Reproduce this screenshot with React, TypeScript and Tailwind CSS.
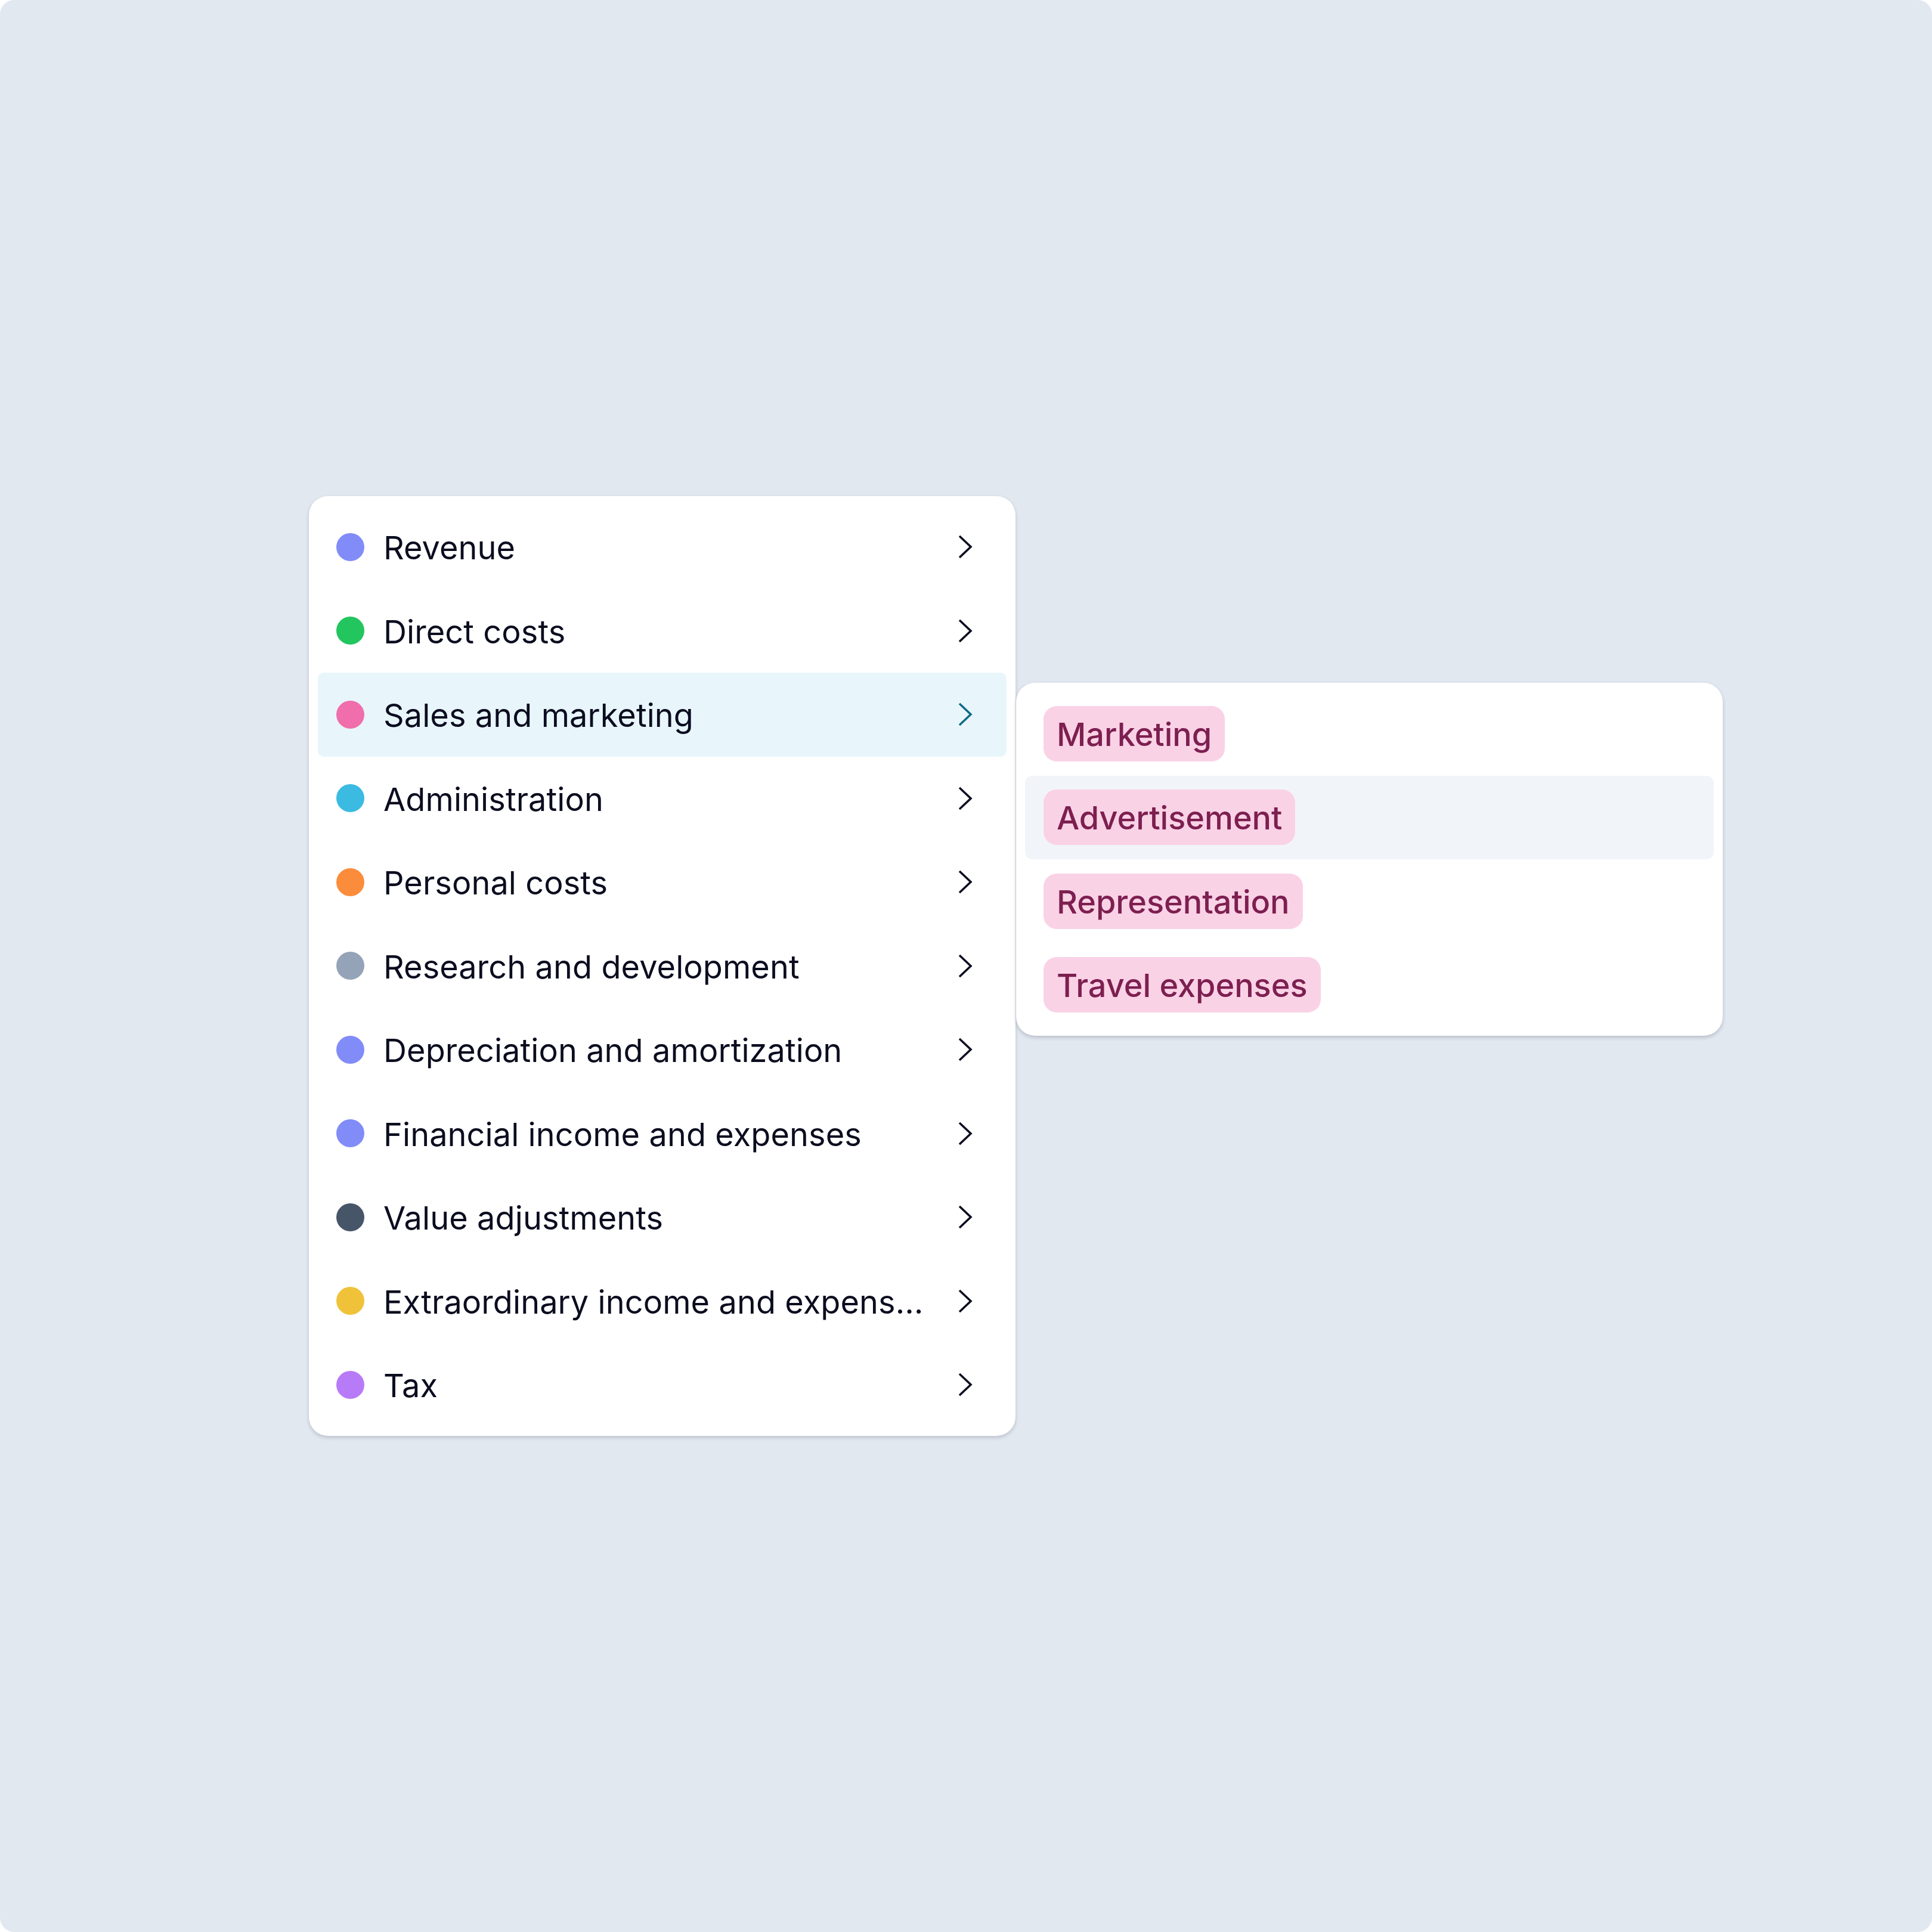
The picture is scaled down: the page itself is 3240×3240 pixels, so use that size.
import React from 'react';

const categories = [
  { name: 'Revenue', color: 'bg-[#818cf8]' },
  { name: 'Direct costs', color: 'bg-[#22c55e]' },
  { name: 'Sales and marketing', color: 'bg-[#f06eab]', active: true },
  { name: 'Administration', color: 'bg-[#3bbae2]' },
  { name: 'Personal costs', color: 'bg-[#fb8c3c]' },
  { name: 'Research and development', color: 'bg-[#94a3b8]' },
  { name: 'Depreciation and amortization', color: 'bg-[#818cf8]' },
  { name: 'Financial income and expenses', color: 'bg-[#818cf8]' },
  { name: 'Value adjustments', color: 'bg-[#475569]' },
  { name: 'Extraordinary income and expenses', color: 'bg-[#efc23a]' },
  { name: 'Tax', color: 'bg-[#b87bf7]' },
];

const subItems = ['Marketing', 'Advertisement', 'Representation', 'Travel expenses'];

function Chevron({ active }: { active?: boolean }) {
  return (
    <svg width="24" height="40" viewBox="0 0 24 40" fill="none" className="shrink-0">
      <polyline
        points="2,2 21,20 2,38"
        stroke={active ? '#0f6b86' : '#0b0d1f'}
        strokeWidth="3.6"
        strokeLinejoin="miter"
      />
    </svg>
  );
}

export default function App() {
  return (
    <div className="w-[3240px] h-[3240px] bg-white" style={{ fontFamily: 'Inter, "Noto Sans", sans-serif' }}>
      <div className="w-full h-full rounded-[24px] bg-[#e2e8f0] pl-[518px] pt-[832px]">
        <div className="relative w-[1185px]">
          {/* main list */}
          <div className="w-[1185px] rounded-[32px] bg-white p-[15px] shadow-[0_3px_6px_rgba(15,23,42,0.18)]">
            {categories.map((c) => (
              <div
                key={c.name}
                className={`flex h-[140.5px] items-center rounded-[10px] pl-[31px] pr-[57px] ${c.active ? 'bg-[#e8f6fc]' : ''}`}
              >
                <span className={`h-[47px] w-[47px] shrink-0 rounded-full ${c.color}`} />
                <span className="ml-[32px] mr-[56px] min-w-0 flex-1 truncate pt-[4px] text-[54px] leading-[1.3] tracking-[0.1px] text-[#0b0d1f]">
                  {c.name}
                </span>
                <Chevron active={c.active} />
              </div>
            ))}
          </div>

          {/* submenu */}
          <div className="absolute left-[1186px] top-[313px] w-[1185px] rounded-[32px] bg-white p-[15px] shadow-[0_3px_6px_rgba(15,23,42,0.2)]">
            {subItems.map((s, i) => (
              <div
                key={s}
                className={`flex h-[140.5px] items-center rounded-[12px] pl-[31px] ${i === 1 ? 'bg-[#f1f5f9]' : ''}`}
              >
                <span className="flex h-[93px] items-center rounded-[22px] bg-[#fad2e6] px-[22px] pt-[3px] text-[54px] font-medium leading-none text-[#7d1f50]">
                  {s}
                </span>
              </div>
            ))}
          </div>
        </div>
      </div>
    </div>
  );
}
